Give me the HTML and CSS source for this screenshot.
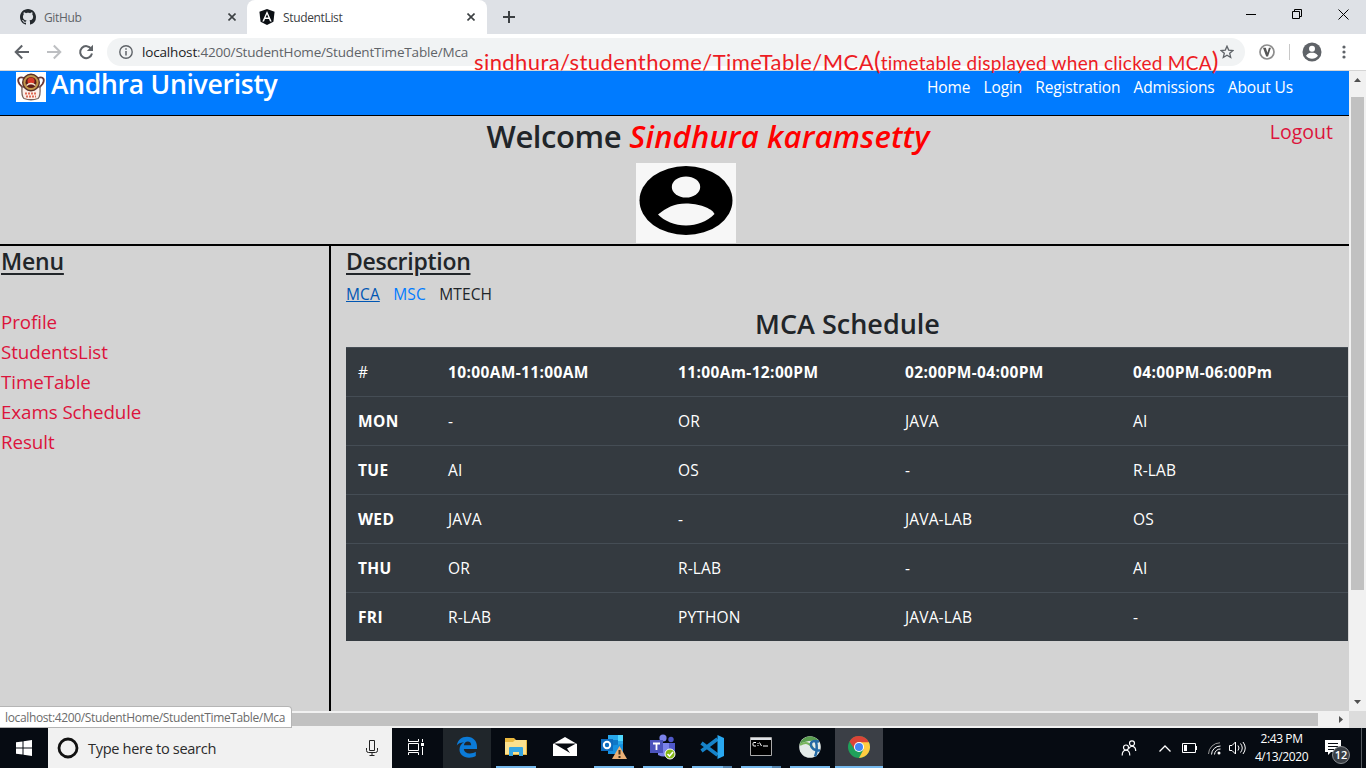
FILE: index.html
```html
<!DOCTYPE html>
<html lang="en">
<head>
<meta charset="utf-8">
<title>StudentList</title>
<link rel="stylesheet" href="styles.css">
</head>
<body>
<div class="tabstrip">
  <div class="tab tab-idle">
    <svg class="fav" viewBox="0 0 16 16"><path fill="#24292e" d="M8 0C3.58 0 0 3.58 0 8c0 3.54 2.29 6.53 5.47 7.59.4.07.55-.17.55-.38 0-.19-.01-.82-.01-1.49-2.01.37-2.53-.49-2.69-.94-.09-.23-.48-.94-.82-1.13-.28-.15-.68-.52-.01-.53.63-.01 1.08.58 1.23.82.72 1.21 1.87.87 2.33.66.07-.52.28-.87.51-1.07-1.78-.2-3.64-.89-3.64-3.95 0-.87.31-1.59.82-2.15-.08-.2-.36-1.02.08-2.12 0 0 .67-.21 2.2.82.64-.18 1.32-.27 2-.27s1.36.09 2 .27c1.53-1.04 2.2-.82 2.2-.82.44 1.1.16 1.92.08 2.12.51.56.82 1.27.82 2.15 0 3.07-1.87 3.75-3.65 3.95.29.25.54.73.54 1.48 0 1.07-.01 1.93-.01 2.2 0 .21.15.46.55.38A8.01 8.01 0 0 0 16 8c0-4.42-3.58-8-8-8z"/></svg>
    <span class="tab-title">GitHub</span>
    <svg class="tab-x" viewBox="0 0 8 8"><path d="M.5.5l7 7M7.5.5l-7 7" stroke="#3c4043" stroke-width="1.6"/></svg>
  </div>
  <div class="tab tab-active">
    <svg class="fav" viewBox="0 0 16 16"><path fill="#0b0f14" d="M8 0l7.6 2.7-1.2 10L8 16l-6.400-3.300L.4 2.700z"/><path fill="#fff" d="M8 1.900L3.300 12.400H5l1-2.400h4l1 2.400h1.700zm0 3.300l1.400 3.400H6.600z"/></svg>
    <span class="tab-title">StudentList</span>
    <svg class="tab-x" viewBox="0 0 8 8"><path d="M.5.5l7 7M7.5.5l-7 7" stroke="#3c4043" stroke-width="1.6"/></svg>
  </div>
  <svg class="new-tab" viewBox="0 0 12 12"><path d="M6 0v12M0 6h12" stroke="#3c4043" stroke-width="2"/></svg>
  <div class="win-buttons">
    <svg width="10" height="10"><path d="M0 5.500h10" stroke="#000"/></svg>
    <svg width="10" height="10" fill="none" stroke="#000"><path d="M.5 2.500h7v7h-7zM2.500 2.500v-2h7v7h-2"/></svg>
    <svg width="11" height="11"><path d="M.5.5l10 10M10.500.5l-10 10" stroke="#000"/></svg>
  </div>
</div>

<div class="toolbar">
  <svg class="nav-ic" viewBox="0 0 16 16" fill="none" stroke="#5f6368" stroke-width="2"><path d="M15 8H2M8.200 1.500L1.700 8l6.500 6.500"/></svg>
  <svg class="nav-ic" viewBox="0 0 16 16" fill="none" stroke="#bdbfc2" stroke-width="2"><path d="M1 8h13M7.800 1.500L14.300 8l-6.500 6.500"/></svg>
  <svg class="nav-ic" viewBox="0 0 16 16"><path d="M13.300 5A6 6 0 1 0 14 9.500" fill="none" stroke="#5f6368" stroke-width="2"/><path d="M15 .8v6.200H8.800z" fill="#5f6368"/></svg>
  <div class="omnibox">
    <svg width="14" height="14" viewBox="0 0 14 14"><circle cx="7" cy="7" r="6.200" fill="none" stroke="#5f6368" stroke-width="1.400"/><path d="M7 6v4.500M7 3.300v1.500" stroke="#5f6368" stroke-width="1.500"/></svg>
    <span class="url"><b>localhost</b>:4200/StudentHome/StudentTimeTable/Mca</span>
    <svg class="star" width="14" height="14" viewBox="0 0 14 14"><path d="M7 1.200l1.700 3.900 4.200.4-3.200 2.800 1 4.200L7 10.300l-3.700 2.200 1-4.200L1.100 5.500l4.200-.4z" fill="none" stroke="#5f6368" stroke-width="1.300"/></svg>
  </div>
  <svg class="ext" width="16" height="16" viewBox="0 0 16 16"><circle cx="8" cy="8" r="7" fill="#fff" stroke="#8d8d8d" stroke-width="1.700"/><path d="M4 3.800h2.800l1.600 5 1.500-5h2L9 12.400H7.200z" fill="#555"/></svg>
  <span class="tool-sep"></span>
  <svg class="avatar" width="20" height="20" viewBox="0 0 20 20"><circle cx="10" cy="10" r="9.500" fill="#5f6368"/><circle cx="10" cy="6.700" r="3" fill="#fff"/><path d="M4 13.700c1.600-2.600 4-3 6-3s4.400.4 6 3c-1.500 2-3.600 3-6 3s-4.500-1-6-3z" fill="#fff"/></svg>
  <svg class="dots" width="4" height="14" viewBox="0 0 4 14" fill="#5f6368"><circle cx="2" cy="2" r="1.600"/><circle cx="2" cy="7" r="1.600"/><circle cx="2" cy="12" r="1.600"/></svg>
</div>

<div class="annotation"><span class="note-big">sindhura/studenthome/TimeTable/MCA</span><span class="note-paren">(</span><span class="note-small">timetable displayed when clicked MCA</span><span class="note-paren">)</span></div>

<div class="browser-body">
  <div class="page">
    <header class="site-header">
      <svg class="crest" viewBox="0 0 30 30"><path fill="#fff" d="M0 0h30v30H0z"/><path d="M8 6C2 4 1 8 3.500 12L7 16M22 6c6-2 7 2 4.500 6L23 16" fill="none" stroke="#6b3a3a" stroke-width="1.800"/><path d="M6 15c-.5 7 0 10 2 11.500q7 2.500 14 0c2-1.500 2.500-4.500 2-11.500z" fill="#fbeee9" stroke="#77625c" stroke-width="1.300"/><circle cx="15" cy="10.500" r="8.300" fill="#c2974a" stroke="#5a3128" stroke-width="1.400"/><circle cx="15" cy="10.500" r="5.500" fill="#5a1d18"/><circle cx="15" cy="9" r="3.500" fill="#d93b2b"/><path d="M10.500 13.500q4.500-4 9 0" stroke="#f4e6cf" stroke-width="1.500" fill="none"/><path d="M9 21.500h12M10 24.500h10" stroke="#e06a55" stroke-width="1.800" stroke-dasharray="2 1"/></svg>
      <span class="brand">Andhra Univeristy</span>
      <nav class="top-nav"><a>Home</a><a>Login</a><a>Registration</a><a>Admissions</a><a>About Us</a></nav>
    </header>
    <section class="welcome">
      <h1><span class="w-hello">Welcome</span> <i>Sindhura karamsetty</i></h1>
      <a class="logout">Logout</a>
      <svg class="portrait" viewBox="0 0 100 80"><path fill="#f7f7f7" d="M0 0h100v80H0z"/><ellipse cx="50" cy="37.500" rx="46.500" ry="34.500"/><ellipse cx="50" cy="24" rx="14.200" ry="10.500" fill="#f7f7f7"/><path d="M22 51.500C30 45 38 40.500 50 40.500S76 45 78.500 51C71 58.500 61 62.500 50 62.500S28 58 22 51.500z" fill="#f7f7f7"/></svg>
    </section>
    <div class="columns">
      <aside class="menu">
        <h2 class="h-menu">Menu</h2>
        <a>Profile</a><a>StudentsList</a><a>TimeTable</a><a>Exams Schedule</a><a>Result</a>
      </aside>
      <main class="desc">
        <h2 class="h-desc">Description</h2>
        <div class="courses"><a class="c-mca">MCA</a><a class="c-msc">MSC</a><span>MTECH</span></div>
        <h3>MCA Schedule</h3>
        <table>
          <tr><td>#</td><th>10:00AM-11:00AM</th><th>11:00Am-12:00PM</th><th>02:00PM-04:00PM</th><th>04:00PM-06:00Pm</th></tr>
          <tr><th>MON</th><td>-</td><td>OR</td><td>JAVA</td><td>AI</td></tr>
          <tr><th>TUE</th><td>AI</td><td>OS</td><td>-</td><td>R-LAB</td></tr>
          <tr><th>WED</th><td>JAVA</td><td>-</td><td>JAVA-LAB</td><td>OS</td></tr>
          <tr><th>THU</th><td>OR</td><td>R-LAB</td><td>-</td><td>AI</td></tr>
          <tr><th>FRI</th><td>R-LAB</td><td>PYTHON</td><td>JAVA-LAB</td><td>-</td></tr>
        </table>
      </main>
    </div>
  </div>
  <div class="vscroll"><svg width="7" height="4"><path d="M0 4l3.500-4L7 4z" fill="#505050"/></svg><span class="vthumb"></span><svg width="7" height="4"><path d="M0 0l3.500 4L7 0z" fill="#505050"/></svg></div>
</div>
<div class="hscroll"><span class="hthumb"></span><svg width="4" height="7"><path d="M0 0l4 3.500L0 7z" fill="#505050"/></svg><span class="corner"></span></div>
<div class="status">localhost:4200/StudentHome/StudentTimeTable/Mca</div>

<footer class="taskbar">
  <div class="start"><svg width="16" height="16" viewBox="0 0 16 16" fill="#fff"><path d="M0 2.300L6.500 1.400v6.100H0zM7.500 1.200L16 0v7.500H7.500zM0 8.500h6.500v6.100L0 13.700zM7.500 8.500H16V16l-8.500-1.200z"/></svg></div>
  <div class="search">
    <svg width="22" height="22" viewBox="0 0 22 22"><circle cx="11" cy="11" r="9" fill="none" stroke="#111" stroke-width="2.800"/></svg>
    <span>Type here to search</span>
    <svg class="mic" width="12" height="16" viewBox="0 0 12 16" fill="none" stroke="#222"><path d="M3.500.5h5v10h-5zM.5 8v2.500q0 2 2 2h7q2 0 2-2V8M6 12.500v3M3.500 15.500h5"/></svg>
  </div>
  <div class="task t-view"><svg width="18" height="16" viewBox="0 0 18 16" fill="none" stroke="#fff"><path d="M1.500 4.500h10v7h-10zM1.500 0v2.500h10V0M1.500 16v-2.500h10V16M15.500 0v3M15.500 8v8"/><path d="M14 4h3v3h-3z" fill="#fff" stroke="none"/></svg></div>
  <div class="task t-edge"><svg width="22" height="22" viewBox="0 0 22 22"><path fill="#0b7bd8" d="M.8 9.600C1.700 3.800 5.600.8 11 .8c6.300 0 10 4.500 10 9.800v2.500H7.800c.3 3 2.700 4.400 6 4.400 2.300 0 4.400-.7 6-1.700v4.300c-2 1.200-4.300 1.600-6.700 1.600-6 0-9.600-3.600-9.600-8.200 0-3 1.700-5.700 4.500-7.200C4 6.600 2.200 7.800.8 9.600zM7.900 9.200h7.300c0-2.300-1.200-3.800-3.400-3.800-2.100 0-3.600 1.700-3.900 3.800z"/></svg></div>
  <div class="task run"><svg width="22" height="20" viewBox="0 0 22 20"><path fill="#e9b83f" d="M0 1h9l2 2h11v15H0z"/><path fill="#fbe18f" d="M0 5h8l2-2h11v14H0z"/><path fill="#35a7e4" d="M4 19v-8q0-1 1-1h12q1 0 1 1v8h-4v-4H8v4z"/></svg></div>
  <div class="task"><svg width="24" height="20" viewBox="0 0 24 20"><path fill="#fff" d="M0 7L12 0l12 7v12H0z"/><path fill="#070b11" d="M1 6.500h22l-9 5 3 4.500z"/></svg></div>
  <div class="task run"><svg width="28" height="26" viewBox="0 0 28 26"><path fill="#28a8ea" d="M8 1h15v10H8z"/><path fill="#0f78c6" d="M8 6h10v12H8z"/><path fill="#50d9ff" d="M18 1h5v6h-5z"/><path fill="#1490df" d="M8 12l15-2v10H8z"/><path fill="#0f6cbd" d="M1 5h12v12H1z"/><circle cx="7" cy="11" r="3.200" fill="none" stroke="#fff" stroke-width="2"/><path fill="#eab076" d="M19.500 12L27 25H12z"/><path stroke="#44321b" stroke-width="2" d="M19.500 16v4.500M19.500 22v2"/></svg></div>
  <div class="task run"><svg width="26" height="26" viewBox="0 0 26 26"><circle cx="13" cy="4" r="3.600" fill="#7b83eb"/><circle cx="21" cy="5.500" r="2.700" fill="#5059c9"/><path fill="#5059c9" d="M17 9h8v9q-3 4-8 2z"/><path fill="#7b83eb" d="M8 9h11v10q-3 6-11 2z"/><path fill="#4b53bc" d="M0 6h13v13H0z"/><path stroke="#fff" stroke-width="1.800" d="M3 9.500h7M6.500 9.500V16"/><circle cx="20" cy="20" r="5" fill="#84b816" stroke="#fff"/><path d="M17.500 20l2 2 3.500-4" fill="none" stroke="#fff" stroke-width="1.600"/></svg></div>
  <div class="task run run-multi"><svg width="24" height="24" viewBox="0 0 24 24"><path d="M1.500 8l16 12M1.500 16l16-12" stroke="#1683c9" stroke-width="3.600"/><path fill="#29a8f0" d="M17.500 0L24 3v18l-6.500 3z"/></svg></div>
  <div class="task run run-multi"><svg width="22" height="20" viewBox="0 0 22 20"><path fill="#000" stroke="#aaa" d="M.5.5h21v18H.5z"/><path fill="#dfe3e8" d="M1 1h20v2H1z"/><path d="M6 5.500H4q-1 0-1 1V8q0 1 1 1h2M8 6v1M8 8v1M9.500 5.500l2 3.500M13 9h5" stroke="#fff" fill="none"/></svg></div>
  <div class="task run"><svg width="22" height="22" viewBox="0 0 22 22"><circle cx="11" cy="11" r="10.800" fill="#e4ebe9"/><path d="M.3 8.500Q3 1 11 .2q5 .3 8 3.300l-3 1.500Q8 4 .3 8.500z" fill="#5b9f50"/><path d="M1 9q8-5 13 3" fill="none" stroke="#79b65c" stroke-width="2"/><path d="M20 5.500q-9-2-8 4 1 5 9 5M17 5.500q2 8-1 15" fill="none" stroke="#246aa5" stroke-width="2.500"/></svg></div>
  <div class="task t-chrome"><svg width="22" height="22" viewBox="0 0 22 22"><circle cx="11" cy="11" r="11" fill="#1fa05a"/><path fill="#ffcd41" d="M11 11V6h9.800A11 11 0 0 1 11 22l4.500-8.400z"/><path fill="#db4437" d="M1.500 5.500a11 11 0 0 1 19.300.7H11v5l-4.500 2z"/><circle cx="11" cy="11" r="5" fill="#fff"/><circle cx="11" cy="11" r="4" fill="#4286f5"/></svg></div>
  <div class="tray">
    <svg class="people" width="16" height="16" viewBox="0 0 16 16" fill="none" stroke="#fff" stroke-width="1.200"><circle cx="5" cy="7.500" r="2.500"/><circle cx="11" cy="3.300" r="2.500"/><path d="M1.200 15.500c0-7 7.600-7 7.600 0M8 8.500c1.500-3.500 6.700-3 6.700 2.500"/></svg>
    <svg class="chev" width="12" height="7" viewBox="0 0 12 7"><path d="M.5 6.500L6 1l5.500 5.500" fill="none" stroke="#fff" stroke-width="1.300"/></svg>
    <svg class="batt" width="15" height="10" viewBox="0 0 15 10"><path d="M.5.500h13v9H.5zM14.500 3v4" fill="none" stroke="#fff"/><path fill="#fff" d="M2 2h3v6H2z"/></svg>
    <svg class="wifi" width="13" height="13" viewBox="0 0 13 13" fill="none" stroke="#fff"><path stroke="#999" d="M.5 12A11.500 11.500 0 0 1 12 .8"/><path d="M3.500 12.500A8.800 8.800 0 0 1 12.500 4M6.500 12.500A5.800 5.800 0 0 1 12.500 7"/><circle cx="11" cy="11" r="1.500" fill="#fff" stroke="none"/></svg>
    <svg class="vol" width="17" height="14" viewBox="0 0 17 14" fill="none" stroke="#fff"><path d="M.5 4.500h2.500l3.500-3.500v12L3 9.500H.5zM9 4.500q2 2.500 0 5M11.500 2.500q3.500 4.500 0 9M14 1q4.500 6 0 12"/></svg>
    <div class="clock"><span class="time">2:43 PM</span><span class="date">4/13/2020</span></div>
    <div class="notif"><svg width="16" height="16" viewBox="0 0 16 16"><path fill="#fff" d="M0 0h16v12H6l-3 3v-3H0z"/><path stroke="#070b11" d="M3 3.500h10M3 6.500h10M3 9.500h6"/></svg><span class="badge">12</span></div>
    <span class="peek"></span>
  </div>
</footer>
</body>
</html>
```

FILE: styles.css
```css
* { box-sizing: border-box; }
body {
  margin: 0; width: 1366px; height: 768px; overflow: hidden;
  display: flex; flex-direction: column; position: relative;
  font-family: "Open Sans", "Noto Sans", sans-serif; font-size: 15.5px; color: #212529;
}
svg { display: block; flex: none; }
h1, h2, h3 { margin: 0; font-weight: 600; }

.tabstrip { height: 34px; flex: none; background: #dee1e6; display: flex; align-items: center; font-size: 12px; color: #3c4043; }
.tab { display: flex; align-items: center; height: 34px; }
.tab-idle { width: 247px; padding: 0 11px 0 20px; color: #5f6368; }
.tab-active { width: 240px; padding: 0 12px; background: #fff; border-radius: 8px 8px 0 0; }
.fav { width: 16px; height: 16px; }
.tab-title { margin-left: 8px; flex: 1; letter-spacing: -.35px; }
.tab-x { width: 8px; height: 8px; }
.new-tab { width: 12px; height: 12px; margin-left: 16px; }
.win-buttons { margin-left: auto; margin-right: 17px; margin-bottom: 5px; display: flex; gap: 36px; }

.toolbar { height: 37px; flex: none; background: #fff; border-bottom: 1px solid #d5d5d5; display: flex; align-items: center; padding-left: 14px; }
.nav-ic { width: 16px; height: 16px; margin-right: 16px; }
.omnibox { width: 1138px; height: 28px; margin-left: -3px; border-radius: 14px; background: #f1f3f4; display: flex; align-items: center; padding: 0 11px 0 12px; }
.url { margin-left: 9px; font-size: 13.5px; color: #5f6368; letter-spacing: -.17px; }
.url b { font-weight: 400; color: #202124; }
.star { margin-left: auto; }
.ext { margin-left: 14px; }
.tool-sep { width: 1px; height: 16px; background: #c8c8c8; margin-left: 14px; }
.avatar { margin-left: 12px; }
.dots { margin-left: 20px; }

.annotation { position: absolute; left: 474px; top: 47px; height: 30px; line-height: 30px; white-space: nowrap; color: #ed1c24; font-family: Lato, sans-serif; z-index: 3; }
.note-big { font-size: 22px; letter-spacing: .42px; }
.note-small { font-size: 19px; letter-spacing: .26px; }
.note-paren { font-size: 25px; line-height: 20px; }

.browser-body { flex: none; height: 640px; display: flex; }
.page { width: 1349px; background: #d3d3d3; display: flex; flex-direction: column; }
.site-header { height: 45px; flex: none; background: #007bff; border-bottom: 1px solid #000; color: #fff; display: flex; align-items: flex-start; padding-left: 16px; }
.crest { width: 30px; height: 30px; margin-top: 1px; }
.brand { margin-left: 5px; font-size: 26.5px; font-weight: 600; line-height: 27px; letter-spacing: -.27px; white-space: nowrap; }
.top-nav { margin-left: auto; margin-right: 56px; display: flex; gap: 13.3px; line-height: 33px; letter-spacing: -.15px; }
.welcome { height: 128px; flex: none; position: relative; display: flex; flex-direction: column; align-items: center; padding-left: 23px; }
.welcome h1 { font-size: 31px; line-height: 40px; height: 47px; margin-left: 44px; white-space: nowrap; }
.w-hello { letter-spacing: -.4px; }
.welcome i { color: red; letter-spacing: .15px; }
.logout { position: absolute; right: 16px; top: 1px; font-size: 19.5px; line-height: 30px; color: #dc143c; }
.portrait { width: 100px; height: 80px; }
.columns { flex: 1; display: flex; border-top: 2px solid #000; }
.menu { width: 331px; border-right: 2px solid #000; padding-left: 1px; display: flex; flex-direction: column; color: #dc143c; font-size: 18.8px; letter-spacing: -.09px; align-items: flex-start; }
.menu a { line-height: 30px; }
h2 { font-size: 23px; line-height: 31px; height: 32px; color: #212529; text-decoration: underline; text-decoration-thickness: 2px; text-underline-offset: 3px; }
.h-menu { margin-bottom: 29px; letter-spacing: -.2px; }
.h-desc { letter-spacing: -.28px; }
.desc { padding-left: 15px; width: 1018px; }
.courses { display: flex; gap: 13.5px; line-height: 32px; height: 29px; letter-spacing: .1px; }
.c-mca { color: #0056b3; text-decoration: underline; }
.c-msc { color: #007bff; }
h3 { font-size: 27px; line-height: 34px; height: 40px; text-align: center; }
table { width: 1002px; table-layout: fixed; border-collapse: separate; border-spacing: 0; background: #343a40; color: #fff; }
td, th { height: 49px; padding: 0 12px; border-top: 1px solid #454d55; text-align: left; white-space: nowrap; letter-spacing: .15px; }
td:nth-child(1), th:nth-child(1) { width: 90px; }
td:nth-child(2), th:nth-child(2) { width: 230px; }
td:nth-child(3), th:nth-child(3) { width: 227px; }
td:nth-child(4), th:nth-child(4) { width: 228px; }
th { font-weight: 700; letter-spacing: .36px; }

.vscroll { width: 17px; background: #f1f1f1; display: flex; flex-direction: column; align-items: center; justify-content: space-between; padding: 7px 0; }
.vthumb { width: 13px; height: 493px; background: #c1c1c1; margin-top: 15px; margin-bottom: auto; }
.hscroll { height: 17px; flex: none; background: #f1f1f1; display: flex; align-items: center; }
.hthumb { width: 1318px; height: 13px; background: #c1c1c1; }
.hscroll svg { margin-left: 21px; }
.corner { width: 17px; height: 17px; background: #dcdcdc; margin-left: auto; }
.status { position: absolute; left: 0; top: 706px; width: 292px; height: 22px; background: #fff; border: 1px solid #b5b5b5; border-left: 0; border-radius: 0 4px 0 0; padding-left: 5px; font-size: 12px; line-height: 21px; color: #6b6b6b; letter-spacing: -.36px; white-space: nowrap; }

.taskbar { height: 40px; flex: none; background: #060b12; display: flex; color: #fff; }
.start { width: 48px; display: flex; align-items: center; justify-content: center; }
.search { width: 344px; background: #f1f1f1; color: #2b2b2b; display: flex; align-items: center; padding: 0 14px 0 9px; font-size: 14.6px; }
.search span { margin-left: 9px; letter-spacing: -.33px; }
.mic { margin-left: auto; }
.task { width: 48px; margin-right: 1px; display: flex; align-items: center; justify-content: center; border-bottom: 2px solid transparent; background-origin: border-box; background-repeat: no-repeat; }
.t-view { margin-right: 3px; }
.t-edge { background-color: #20262b; }
.run { background-image: linear-gradient(#76b9ed, #76b9ed); background-size: 40px 2px; background-position: 4px 38px; }
.run-multi { background-image: linear-gradient(90deg, #76b9ed 31px, #5484ad 31px); }
.t-chrome { background-color: #3b3f46; border-bottom-color: #76b9ed; }
.tray { margin-left: auto; display: flex; align-items: center; }
.people { margin-right: 1px; }
.chev { margin-left: 21px; }
.batt { margin-left: 11px; }
.wifi { margin-left: 11px; }
.vol { margin-left: 8px; }
.clock { width: 71px; display: flex; flex-direction: column; align-items: center; font-size: 12px; line-height: 18px; letter-spacing: -.4px; }
.notif { position: relative; margin-left: 8px; }
.badge { position: absolute; left: 7px; top: 6px; width: 18px; height: 18px; border-radius: 9px; background: #3a3f45; border: 1px solid #8b8f93; font-size: 11px; font-weight: 600; line-height: 16px; text-align: center; }
.peek { width: 1px; height: 40px; background: #555a60; margin: 0 4px 0 20px; }
```
